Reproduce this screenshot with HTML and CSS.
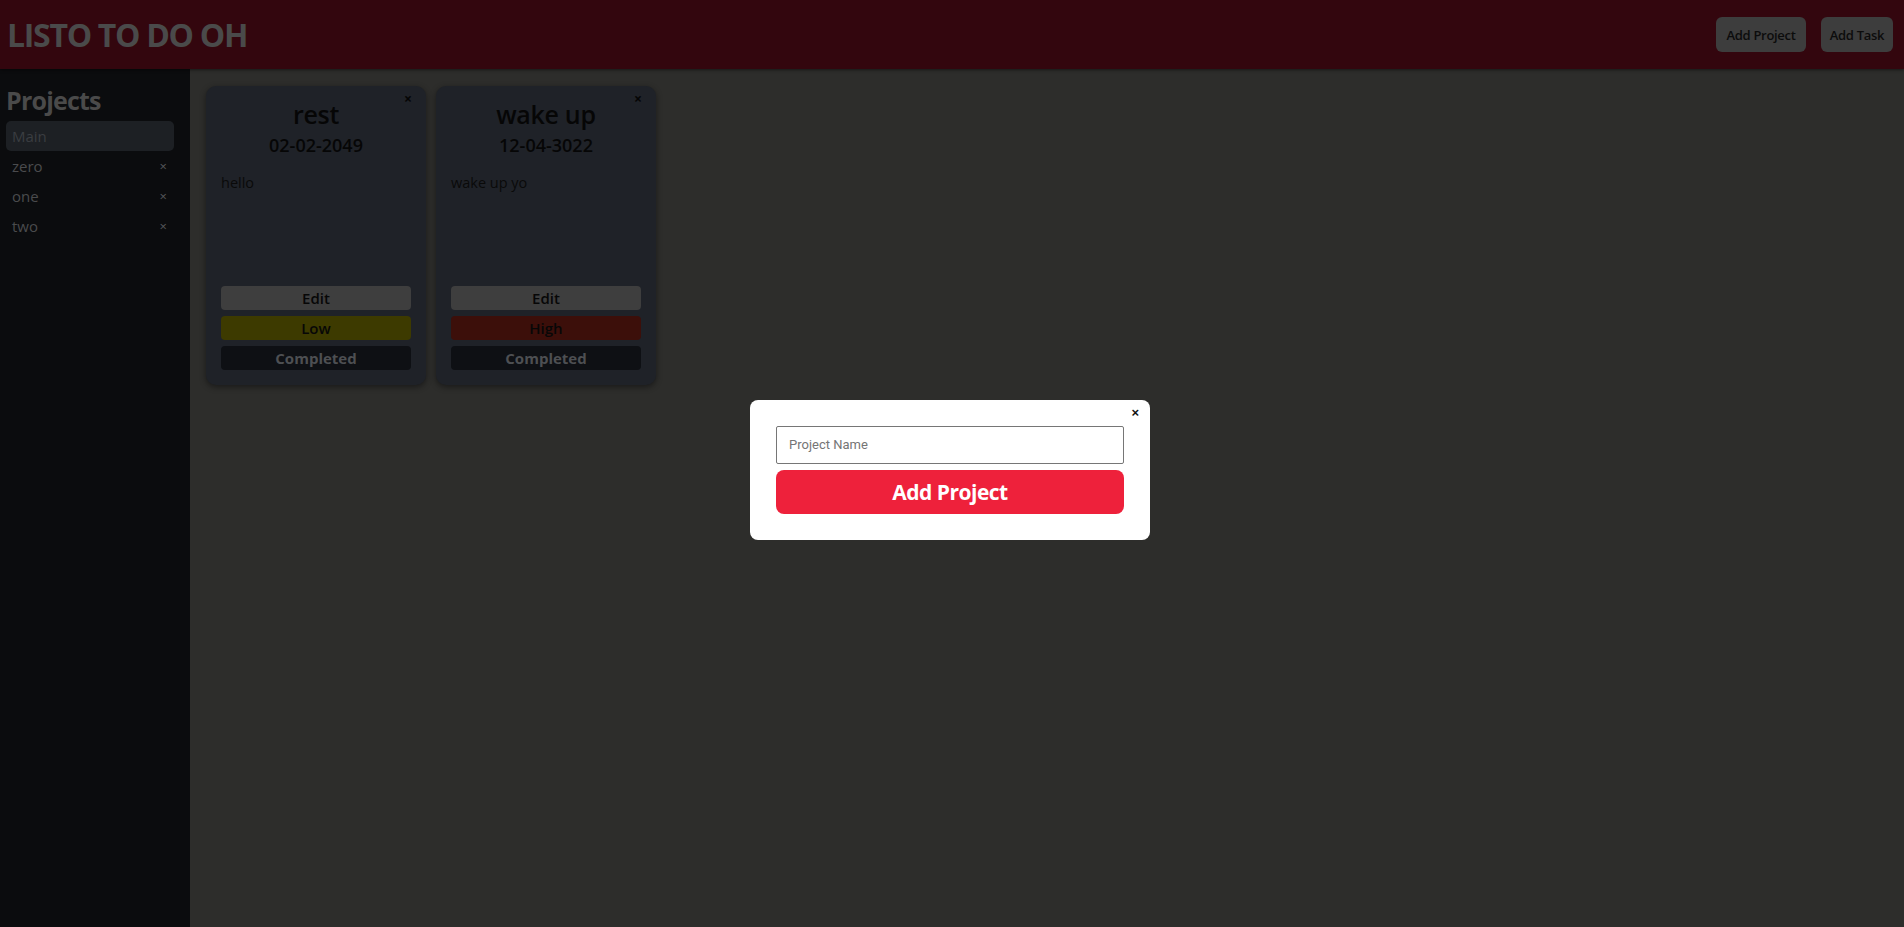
FILE: index.html
```html
<!DOCTYPE html>
<html>
<head>
<meta charset="utf-8">
<title>Listo To Do Oh</title>
<link rel="stylesheet" href="styles.css">
</head>
<body>
<header class="topbar">
  <h1 class="logo">LISTO TO DO OH</h1>
  <div class="top-actions">
    <button class="top-btn">Add Project</button>
    <button class="top-btn">Add Task</button>
  </div>
</header>
<div class="layout">
  <aside class="sidebar">
    <h2 class="side-title">Projects</h2>
    <ul class="project-list">
      <li class="project active"><span>Main</span></li>
      <li class="project"><span>zero</span><span class="x">×</span></li>
      <li class="project"><span>one</span><span class="x">×</span></li>
      <li class="project"><span>two</span><span class="x">×</span></li>
    </ul>
  </aside>
  <main class="content">
    <div class="card">
      <span class="card-close">×</span>
      <h3 class="card-title">rest</h3>
      <div class="card-date">02-02-2049</div>
      <p class="card-desc">hello</p>
      <div class="card-actions">
        <button class="cbtn edit">Edit</button>
        <button class="cbtn low">Low</button>
        <button class="cbtn done">Completed</button>
      </div>
    </div>
    <div class="card">
      <span class="card-close">×</span>
      <h3 class="card-title">wake up</h3>
      <div class="card-date">12-04-3022</div>
      <p class="card-desc">wake up yo</p>
      <div class="card-actions">
        <button class="cbtn edit">Edit</button>
        <button class="cbtn high">High</button>
        <button class="cbtn done">Completed</button>
      </div>
    </div>
  </main>
</div>
<div class="overlay">
  <form class="modal">
    <span class="modal-close">×</span>
    <input class="modal-input" type="text" placeholder="Project Name">
    <button type="button" class="modal-btn">Add Project</button>
  </form>
</div>
</body>
</html>
```

FILE: styles.css
```css
* { box-sizing: border-box; }
html, body { margin: 0; padding: 0; height: 100%; }
body {
  font-family: "Open Sans", "Noto Sans", "DejaVu Sans", sans-serif;
  background: #2d2d2b;
  display: flex;
  flex-direction: column;
  overflow: hidden;
}
.topbar {
  height: 69px;
  flex: 0 0 69px;
  background: #33060e;
  display: flex;
  align-items: center;
  justify-content: space-between;
  padding: 0 11px 0 7px;
  box-shadow: 0 1px 3px rgba(0,0,0,0.5);
  position: relative;
  z-index: 1;
}
.logo {
  margin: 0;
  font-size: 32px;
  font-weight: 700;
  color: #4a4a4a;
  letter-spacing: -1.3px;
}
.top-actions { display: flex; gap: 15px; }
.top-btn {
  height: 35px;
  border: none;
  border-radius: 6px;
  background: #3d3d3d;
  color: #0c0c0c;
  font-family: inherit;
  font-size: 13px;
  font-weight: 600;
  padding: 0;
  white-space: nowrap;
  letter-spacing: -0.3px;
}
.top-btn:first-child { width: 90px; }
.top-btn:last-child { width: 72px; }
.layout { flex: 1; display: flex; min-height: 0; }
.sidebar {
  width: 190px;
  background: #0b0c0e;
  padding: 14px 16px 0 6px;
}
.side-title {
  margin: 0 0 4px 0;
  font-size: 25px;
  font-weight: 700;
  color: #4a4a4a;
  letter-spacing: -0.8px;
}
.project-list { list-style: none; margin: 0; padding: 0; }
.project {
  height: 30px;
  display: flex;
  align-items: center;
  justify-content: space-between;
  padding: 0 6px;
  font-size: 15px;
  color: #4a4b4d;
}
.project.active {
  background: #1d2024;
  border-radius: 5px;
  color: #3a3d41;
}
.project .x { font-size: 13px; color: #55575a; padding-right: 1px; }
.content {
  flex: 1;
  display: flex;
  align-items: flex-start;
  gap: 10px;
  padding: 17px 16px;
}
.card {
  position: relative;
  width: 220px;
  height: 299px;
  background: #1f2228;
  border-radius: 10px;
  box-shadow: 0 2px 6px rgba(0,0,0,0.45);
  padding: 11px 15px 15px 15px;
  display: flex;
  flex-direction: column;
  align-items: center;
}
.card-close {
  position: absolute;
  top: 3px;
  right: 14px;
  font-size: 14px;
  font-weight: 700;
  color: #050505;
}
.card-title {
  margin: 0;
  font-size: 25px;
  font-weight: 600;
  color: #060606;
  line-height: 34px;
  letter-spacing: -0.3px;
}
.card-date {
  font-size: 18px;
  font-weight: 600;
  color: #060606;
  line-height: 28px;
}
.card-desc {
  align-self: flex-start;
  margin: 14px 0 0 0;
  font-size: 14.5px;
  color: #0a0a0a;
}
.card-actions {
  margin-top: auto;
  width: 100%;
  display: flex;
  flex-direction: column;
  gap: 6px;
}
.cbtn {
  height: 24px;
  border: none;
  border-radius: 4px;
  font-family: inherit;
  font-size: 15px;
  font-weight: 600;
  color: #070707;
  padding: 0;
  line-height: 24px;
}
.cbtn.edit { background: #3e3e3e; }
.cbtn.low { background: #3d3a00; }
.cbtn.high { background: #3c0f0a; }
.cbtn.done { background: #0e1014; color: #4d4f52; font-weight: 700; }
.overlay {
  position: fixed;
  inset: 0;
  display: flex;
  align-items: center;
  justify-content: center;
  padding-top: 12px;
  padding-right: 4px;
  z-index: 10;
}
.modal {
  position: relative;
  width: 400px;
  height: 140px;
  background: #ffffff;
  border-radius: 8px;
  padding: 26px;
  display: flex;
  flex-direction: column;
  gap: 6px;
}
.modal-close {
  position: absolute;
  top: 5px;
  right: 11px;
  font-size: 13px;
  font-weight: 700;
  color: #111;
  font-family: "Liberation Sans", sans-serif;
}
.modal-input {
  height: 38px;
  width: 100%;
  border: 1px solid #767676;
  border-radius: 2px;
  padding: 0 12px;
  font-family: Roboto, "Liberation Sans", sans-serif;
  font-size: 13px;
  color: #222;
}
.modal-input::placeholder { color: #757575; }
.modal-btn {
  height: 44px;
  width: 100%;
  border: none;
  border-radius: 8px;
  background: #ee213b;
  color: #ffffff;
  font-family: inherit;
  font-size: 21px;
  font-weight: 700;
  letter-spacing: -0.5px;
}
```
